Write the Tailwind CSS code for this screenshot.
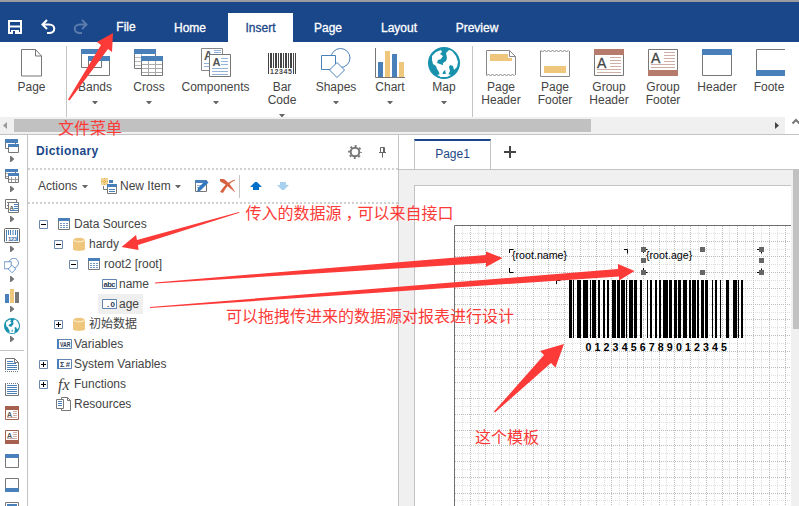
<!DOCTYPE html>
<html lang="zh">
<head>
<meta charset="utf-8">
<title>Report Designer</title>
<script src="https://cdn.jsdelivr.net/npm/@tailwindcss/browser@4"></script>
</head>
<body class="w-[799px] h-[506px] overflow-hidden bg-white text-[12px] leading-[13px] text-[#444] font-['Liberation_Sans','Noto_Sans_CJK_SC',sans-serif]">

<svg width="0" height="0" class="absolute">
  <defs>
    <symbol id="caret" viewBox="0 0 6 4"><path d="M0 1h6L3.500 4h-1z" fill="#666"/></symbol>
    <symbol id="right" viewBox="0 0 4 6"><path d="M0 0h1l3 2.500v1L1 6H0z" fill="#777"/></symbol>
    <symbol id="minus" viewBox="0 0 9 9"><path d="M.5.5h8v8h-8z" fill="#fff" stroke="#6c88a8"/><path d="M2 4.500h5" stroke="#000"/></symbol>
    <symbol id="plus" viewBox="0 0 9 9"><path d="M.5.5h8v8h-8z" fill="#fff" stroke="#6c88a8"/><path d="M2 4.500h5M4.500 2v5" stroke="#000"/></symbol>
    <symbol id="table" viewBox="0 0 12 12"><path d="M.5 1v10.500h11V1" fill="#fff" stroke="#777"/><path d="M0 0h12v3H0z" fill="#4a80ba"/><path d="M2 5.500h8M2 7.500h8M2 9.500h8" stroke="#6f9acb" stroke-dasharray="2 1"/></symbol>
    <symbol id="db" viewBox="0 0 12 14"><path d="M0 3v9c0 2.500 12 2.500 12 0V3z" fill="#efc77c"/><ellipse cx="6" cy="2.600" rx="5.700" ry="2.200" fill="#efc77c" stroke="#fff" stroke-width=".7"/></symbol>
    <symbol id="globe" viewBox="0 0 32 32"><circle cx="16" cy="16" r="16" fill="#1891ad"/><path d="M4 9L8 5l5-2 1 2-2 2 3 2-2 3-3 1-1 3 3 1 5 2 1 3-3 3-1 4-2 1-1-5-2-3-1-3-3-2-1-4zM18 6l3-3 3 1 4 5 2 6-1 5-3 3-1-4-3-1-1 2 1 4-2 4-2 0-1-6-2-2 0-4 3-2 1-3zM9 28l4-1 7 0 3 1-4 2-6 0z" fill="#fff"/></symbol>
    <symbol id="shapes" viewBox="0 0 30 30"><g fill="#fff" stroke="#4a80ba"><circle cx="19.500" cy="10" r="9.500"/><path d="M.5 7.500h14v14H.5z"/><path d="M16 14.500l7.500 7.500-7.500 7.500L8.500 22z"/></g></symbol>
  </defs>
</svg>

<header class="h-[42px] border-t-2 border-[#999b9e] bg-[#1a4789] flex text-white">
  <div class="w-[89px] shrink-0 flex">
    <svg width="89" height="40" fill="none">
      <path d="M9 19h12v12H9z" stroke="#fff" stroke-width="2"/><path d="M9 24.500h12" stroke="#fff" stroke-width="2"/><path d="M11 28h8v4h-8z" fill="#fff"/><path d="M13 29h2v3h-2z" fill="#1a4789"/>
      <path d="M47 18l-4.500 4.500L47 27M43 22.500h6c7 0 7 8.500 0 8.500h-2" stroke="#fff" stroke-width="2.100"/>
      <path d="M82 18l4.500 4.500L82 27M86 22.500h-6c-7 0-7 8.500 0 8.500h2" stroke="#5b7bad" stroke-width="2"/>
    </svg>
  </div>
  <nav class="flex pt-[11px] h-[40px] [&>div]:text-center [&>div]:leading-[30px] [&>div]:[-webkit-text-stroke:0.3px]">
    <div class="w-[74px] -mt-px">File</div>
    <div class="w-[54px]">Home</div>
    <div class="w-[65px] ml-[11px] bg-white text-[#1a4789]">Insert</div>
    <div class="w-[70px]">Page</div>
    <div class="w-[72px]">Layout</div>
    <div class="w-[84px]">Preview</div>
  </nav>
</header>

<section class="h-[93px] border-b border-[#c3c3c3]">
  <div class="h-[75px] w-[785px] overflow-hidden flex text-center pt-[4px] [&>div]:shrink-0 [&>div]:flex [&>div]:flex-col [&>div]:items-center [&>div>svg:first-child]:mb-[1px] [&>div>svg:first-child]:shrink-0 [&>div>svg:first-child]:h-[34px]">
    <div class="w-[63px]"><svg width="22" height="34" viewBox="0 0 22 34"><path d="M.5 3.500h14l6 6.500v20H.5zM14.500 3.500V10h6" fill="#fff" stroke="#777"/></svg>Page</div>
    <div class="w-[5px]"><i class="w-px h-[72px] bg-[#c6c6c6] ml-[2px]"></i></div>
    <div class="w-[54px]"><svg width="29" height="34"><path d="M.5 4v17.500h20V4M7.500 11v18.500h21V11" fill="#fff" stroke="#777"/><path d="M0 3h21v5H0z" fill="#4a80ba"/><path d="M7 10h22v5H7z" fill="#4a80ba"/></svg>Bands<svg width="6" height="4" class="mt-[6px]"><use href="#caret"/></svg></div>
    <div class="w-[54px]"><svg width="30" height="34"><path d="M.5 4v18.500h21V4" fill="#fff" stroke="#777"/><path d="M1 11.500h20M1 15.500h20M1 19.500h20M7.500 8v14" stroke="#bbb"/><path d="M0 3h22v5H0z" fill="#4a80ba"/><path d="M7.500 11v18.500h21V11" fill="#fff" stroke="#777"/><path d="M8 18.500h20M8 22.500h20M8 26.500h20M14.500 15v14M21.500 15v14" stroke="#aaa"/><path d="M7 10h22v5H7z" fill="#4a80ba"/></svg>Cross<svg width="6" height="4" class="mt-[6px]"><use href="#caret"/></svg></div>
    <div class="w-[79px]"><svg width="30" height="34" class="ml-[1px]"><path d="M.5 2.500h21v22H.5z" fill="#fff" stroke="#888"/><text x="3" y="14" font-size="12" font-weight="bold" fill="#555">A</text><path d="M13 4.500h7M13 6.500h7M3 17.500h7M3 20.500h7" stroke="#94b3d8"/><path d="M8.500 8.500h21v22h-21z" fill="#fff" stroke="#777"/><text x="11.500" y="20" font-size="11" font-weight="bold" fill="#555">A</text><path d="M20 12.500h7M20 15.500h7M20 18.500h7M11 22.500h16M11 25.500h16M11 28.500h16" stroke="#94b3d8"/></svg>Components<svg width="6" height="4" class="mt-[6px]"><use href="#caret"/></svg></div>
    <div class="w-[54px]"><svg width="28" height="34" shape-rendering="crispEdges" fill="#444"><path d="M0 7h1v21H0zM2 7h2v15H2zM5 7h1v15H5zM7 7h2v15H7zM10 7h1v15h-1zM12 7h2v15h-2zM15 7h1v15h-1zM17 7h2v15h-2zM20 7h1v15h-1zM22 7h2v15h-2zM25 7h1v21h-1zM27 7h1v21h-1z"/><text x="2" y="28" font-size="7" font-weight="bold" textLength="22">12345</text></svg>Bar<br>Code<svg width="6" height="4" class="mt-[6px]"><use href="#caret"/></svg></div>
    <div class="w-[54px]"><svg width="30" height="34" viewBox="0 0 30 34"><use href="#shapes" y="2" width="30" height="30"/></svg>Shapes<svg width="6" height="4" class="mt-[6px]"><use href="#caret"/></svg></div>
    <div class="w-[54px]"><svg width="30" height="34"><path d="M.5 2v29.500H30" fill="none" stroke="#777"/><path d="M3 16h5v15H3zM17 8h5v23h-5z" fill="#4a80ba"/><path d="M10 5h5v26h-5zM24 16h5v15h-5z" fill="#efc77c"/></svg>Chart<svg width="6" height="4" class="mt-[6px]"><use href="#caret"/></svg></div>
    <div class="w-[54px]"><svg width="32" height="34"><use href="#globe" y="1" width="32" height="32"/></svg>Map<svg width="6" height="4" class="mt-[6px]"><use href="#caret"/></svg></div>
    <div class="w-[3px]"><i class="w-px h-[72px] bg-[#c6c6c6]"></i></div>
    <div class="w-[54px]"><svg width="30" height="34"><path d="M.5 29V4.500h23l6 6V29M23.500 4.500v6h6" fill="none" stroke="#888"/><path d="M.5 30l2-2 2 2 2-2 2 2 2-2 2 2 2-2 2 2 2-2 2 2 2-2 2 2 2-2 2 2" fill="none" stroke="#888"/><path d="M4 8h18v4h4v3H4z" fill="#efc77c"/></svg>Page<br>Header</div>
    <div class="w-[54px]"><svg width="30" height="34"><path d="M.5 5v25.500h29V5" fill="none" stroke="#888"/><path d="M.5 4l2 2 2-2 2 2 2-2 2 2 2-2 2 2 2-2 2 2 2-2 2 2 2-2 2 2 2-2" fill="none" stroke="#888"/><path d="M4 20h22v7H4z" fill="#efc77c"/></svg>Page<br>Footer</div>
    <div class="w-[54px]"><svg width="30" height="34"><path d="M.5 3.500h29v26H.5z" fill="#fff" stroke="#777"/><path d="M0 3h30v6H0z" fill="#b57b6d"/><text x="3" y="22" font-size="14" fill="#444" stroke="#444" stroke-width=".3">A</text><path d="M16 11.500h11M16 14.500h11M16 17.500h11M16 20.500h11M3 23.500h24M3 26.500h24" stroke="#d0ada5"/></svg>Group<br>Header</div>
    <div class="w-[54px]"><svg width="30" height="34"><path d="M.5 3.500h29v26H.5z" fill="#fff" stroke="#777"/><path d="M0 24h30v6H0z" fill="#b57b6d"/><text x="3" y="17" font-size="14" fill="#444" stroke="#444" stroke-width=".3">A</text><path d="M16 6.500h11M16 9.500h11M16 12.500h11M16 15.500h11M3 18.500h24M3 21.500h24" stroke="#d0ada5"/></svg>Group<br>Footer</div>
    <div class="w-[54px]"><svg width="30" height="34"><path d="M.5 3.500h29v26H.5z" fill="#fff" stroke="#777"/><path d="M0 3h30v6H0z" fill="#4a80ba"/></svg>Header</div>
    <div class="w-[54px]"><svg width="30" height="34"><path d="M.5 3.500h29v26H.5z" fill="#fff" stroke="#777"/><path d="M0 24h30v6H0z" fill="#4a80ba"/></svg><span class="mr-[4px]">Foote</span></div>
  </div>
  <div class="h-[17px] flex items-center">
    <div class="w-[785px] h-[17px] bg-[#f0f0f0] flex items-center">
      <svg width="14" height="9"><path d="M7 1v7L3 4.500z" fill="#999"/></svg>
      <i class="w-[577px] h-[13px] bg-[#c1c1c1]"></i>
      <svg width="8" height="9" class="ml-[182px]"><path d="M2 1v7l4-3.500z" fill="#444"/></svg>
    </div>
    <svg width="14" height="17"><path d="M7.500 6.500L11 3l3.500 3.500" fill="none" stroke="#777" stroke-width="2"/></svg>
  </div>
</section>

<main class="flex h-[371px]">
  <aside class="w-[28px] border-r border-[#c3c3c3] shrink-0">
    <svg width="27" height="371" fill="none">
      <path d="M5.500 4v9.500h10V4" fill="#fff" stroke="#777"/><path d="M5 4h13v4H5z" fill="#4a80ba"/><path d="M8.500 9v8.500h10V9" fill="#fff" stroke="#777"/><path d="M8 9h11v3H8z" fill="#4a80ba"/>
      <path d="M5.500 35v8.500h10V35" fill="#fff" stroke="#777"/><path d="M6 38.500h5M6 41.500h5" stroke="#aaa"/><path d="M5 34h13v3H5z" fill="#4a80ba"/><path d="M8.500 39v8.500h10V39" fill="#fff" stroke="#777"/><path d="M9 44.500h9M11.500 42v5M15.500 42v5" stroke="#999"/><path d="M8 38h11v3H8z" fill="#4a80ba"/>
      <path d="M5.500 64.500h11v9h-11z" fill="#fff" stroke="#777"/><path d="M7 67.500h2M7 70.500h2" stroke="#777"/><path d="M8.500 67.500h10v10h-10z" fill="#fff" stroke="#777"/><text x="9.500" y="75" font-size="6" font-weight="bold" fill="#444">A</text><path d="M14 69.500h4M14 71.500h4M14 73.500h4M10 75.500h8" stroke="#4a80ba"/>
      <rect x="4.500" y="93.500" width="15" height="14" rx="1" stroke="#666"/><path d="M6.500 95v11M8.500 95v5M10.500 95v5M13 95v5M15.500 95v5M17.500 95v11" stroke="#4a80ba"/><text x="8" y="106" font-size="6" font-weight="bold" fill="#3a70aa" textLength="9">123</text>
      <use href="#shapes" x="4" y="123" width="15" height="15" stroke-width="1.600"/>
      <path d="M5 159h4v9H5z" fill="#4a80ba"/><path d="M10 154h4v14h-4z" fill="#efc77c"/><path d="M15 157h4v11h-4z" fill="#777"/>
      <use href="#globe" x="4" y="183" width="16" height="16"/>
      <g><use href="#right" x="10" y="21" width="4" height="6"/><use href="#right" x="10" y="51" width="4" height="6"/><use href="#right" x="10" y="81" width="4" height="6"/><use href="#right" x="10" y="111" width="4" height="6"/><use href="#right" x="10" y="141" width="4" height="6"/><use href="#right" x="10" y="171" width="4" height="6"/><use href="#right" x="10" y="201" width="4" height="6"/></g>
      <path d="M0 215.500h24" stroke="#c3c3c3"/>
      <path d="M5.500 235v-11.500h9l4 4V235M14.500 223.500v4h4" stroke="#777"/><path d="M5 236.500h14" stroke="#777" stroke-dasharray="1 1"/><path d="M7 226.500h6M7 228.500h9M7 230.500h10M7 232.500h10M7 234.500h10" stroke="#4a80ba"/>
      <path d="M5.500 249v11.500h13V249" stroke="#777"/><path d="M5 248.500h14" stroke="#777" stroke-dasharray="1 1"/><path d="M7 250.500h10M7 252.500h10M7 254.500h10M7 256.500h10M7 258.500h10" stroke="#4a80ba"/>
      <path d="M5.500 271.500h13v13h-13z" stroke="#a5604f"/><path d="M5 271h14v4H5z" fill="#a5604f"/><text x="7" y="282" font-size="7" font-weight="bold" fill="#555">A</text><path d="M13 276.500h4M13 278.500h4M13 280.500h4M7 282.500h10" stroke="#d0ada5"/>
      <path d="M5.500 295.500h13v13h-13z" stroke="#a5604f"/><path d="M5 305h14v4H5z" fill="#a5604f"/><text x="7" y="303" font-size="7" font-weight="bold" fill="#555">A</text><path d="M13 297.500h4M13 299.500h4M13 301.500h4M7 303.500h10" stroke="#d0ada5"/>
      <path d="M5.500 319.500h13v13h-13z" stroke="#777"/><path d="M5 319h14v4H5z" fill="#4a80ba"/>
      <path d="M5.500 343.500h13v13h-13z" stroke="#777"/><path d="M5 353h14v4H5z" fill="#4a80ba"/>
      <path d="M5.500 367.500h13v13h-13z" stroke="#777"/><path d="M7 369h10v3H7z" fill="#4a80ba"/>
    </svg>
  </aside>

  <section class="w-[371px] shrink-0 border-r border-[#c3c3c3]">
    <div class="h-[35px] border-b-2 border-dotted border-[#d0d0d0] flex items-center px-[8px]">
      <h2 class="font-bold text-[12px] tracking-[0.4px] text-[#1a4789] w-[312px]">Dictionary</h2>
      <svg width="14" height="14" fill="none"><circle cx="7" cy="7" r="4.300" stroke="#777" stroke-width="2"/><circle cx="7" cy="7" r="6" stroke="#777" stroke-width="1.800" stroke-dasharray="2 2.710" stroke-dashoffset="1"/></svg>
      <svg width="7" height="12" class="ml-[17px]" fill="none" stroke="#666"><path d="M1.500 6V1.500h4V6M4.500 1v5M0 6.500h7M3.500 7v4.500"/></svg>
    </div>
    <div class="h-[34px] border-b-2 border-dotted border-[#d0d0d0] flex items-center pl-[10px]">
      <span class="w-[44px]">Actions</span><svg width="6" height="4"><use href="#caret"/></svg>
      <svg width="16" height="16" class="ml-[13px]"><path d="M0 0h7v7H0z" fill="#f2d391"/><path d="M3.500 0v7M0 3.500h7" stroke="#e3ad45" stroke-dasharray="1 1"/><path d="M2.500 8v3.500H6" fill="none" stroke="#777"/><path d="M8 2h4v3H8z" fill="#4a80ba"/><path d="M6.500 7v8.500h9V7" fill="#fff" stroke="#777"/><path d="M6 6h10v3H6z" fill="#4a80ba"/><path d="M8 11.500h6M8 13.500h6" stroke="#4a80ba"/></svg>
      <span class="w-[55px] ml-[3px] whitespace-nowrap">New Item</span><svg width="6" height="4"><use href="#caret"/></svg>
      <svg width="15" height="14" class="ml-[13px]"><path d="M1.500 1.500h11v11h-11z" fill="#fff" stroke="#777"/><path d="M1 1h10v3H1z" fill="#4a80ba"/><path d="M3 6.500h5M3 8.500h3" stroke="#94b3d8"/><path d="M3 13l1-4 8-8 2.500 2.500-8 8z" fill="#3479c0"/></svg>
      <svg width="15" height="14" class="ml-[11px]"><path d="M0 0h3.500C8 3 11 7 14.500 12.500 10 9 6 5 0 2zM15 1C10 3 6 8 3 13.500L.5 13C4 7 8 3 15 1z" fill="#d7603f" stroke="#d7603f" stroke-width=".6"/></svg>
      <i class="w-px h-[23px] bg-[#c6c6c6] ml-[4px]"></i>
      <svg width="12" height="8" class="ml-[10px]"><path d="M5 0h2l5 5H9v3H3V5H0z" fill="#0070c8"/></svg>
      <svg width="12" height="8" class="ml-[15px]"><path d="M3 0h6v3h3L7 8H5L0 3h3z" fill="#a8d0ef"/></svg>
    </div>
    <ul class="pt-[10px] [&>li]:h-[20px] [&>li]:flex [&>li]:items-center [&_svg]:shrink-0">
      <li class="pl-[11px]"><svg width="9" height="9"><use href="#minus"/></svg><svg width="12" height="12" class="ml-[10px] mr-[4px]"><use href="#table"/></svg>Data Sources</li>
      <li class="pl-[26px]"><svg width="9" height="9"><use href="#minus"/></svg><svg width="12" height="14" class="ml-[10px] mr-[4px]"><use href="#db"/></svg>hardy</li>
      <li class="pl-[41px]"><svg width="9" height="9"><use href="#minus"/></svg><svg width="12" height="12" class="ml-[10px] mr-[4px]"><use href="#table"/></svg>root2 [root]</li>
      <li class="pl-[74px]"><svg width="15" height="10" class="mr-[2px]"><path d="M.5.5h14v9H.5z" fill="#fff" stroke="#6384b0"/><text x="1.500" y="8" font-size="7.500" font-weight="bold" fill="#2a3a55" textLength="12">abc</text></svg>name</li>
      <li class="pl-[70px]"><span class="flex items-center h-[20px] w-[45px] bg-[#efefef] pl-[4px]"><svg width="15" height="10" class="mr-[2px]"><path d="M.5.5h14v9H.5z" fill="#fff" stroke="#6384b0"/><text x="5" y="8" font-size="8" font-weight="bold" fill="#2a3a55" textLength="8">.0</text></svg>age</span></li>
      <li class="pl-[26px]"><svg width="9" height="9"><use href="#plus"/></svg><svg width="12" height="14" class="ml-[10px] mr-[4px]"><use href="#db"/></svg>初始数据</li>
      <li class="pl-[29px]"><svg width="15" height="10" class="mr-[2px]"><path d="M.5.5h14v9H.5z" fill="#fff" stroke="#6384b0"/><path d="M0 0h2v10H0z" fill="#4a80ba"/><text x="3" y="7.500" font-size="6.500" font-weight="bold" fill="#2a3a55" textLength="10.500" lengthAdjust="spacingAndGlyphs">VAR</text></svg>Variables</li>
      <li class="pl-[11px]"><svg width="9" height="9"><use href="#plus"/></svg><svg width="15" height="10" class="ml-[9px] mr-[2px]"><path d="M.5.5h14v9H.5z" fill="#fff" stroke="#6384b0"/><path d="M0 0h2v10H0z" fill="#4a80ba"/><text x="3" y="8" font-size="7.500" font-weight="bold" fill="#2a3a55" textLength="10">Σ#</text></svg>System Variables</li>
      <li class="pl-[11px]"><svg width="9" height="9"><use href="#plus"/></svg><span class="w-[16px] ml-[10px] font-['Liberation_Serif',serif] italic text-[16px]">fx</span>Functions</li>
      <li class="pl-[28px]"><svg width="16" height="15" class="mr-[2px]" fill="#fff" stroke="#777"><path d="M5.500.5h6l3 3v10h-9z"/><path d="M11.500.5v3h3" fill="none"/><path d="M.5 2.500h7v9h-7z"/><path d="M2 4.500h4M2 6.500h4M2 8.500h4" stroke="#4a80ba"/></svg>Resources</li>
    </ul>
  </section>

  <section class="flex-1 flex flex-col min-w-0">
    <div class="h-[35px] border-b border-[#c3c3c3] flex pl-[15px] shrink-0">
      <div class="w-[77px] h-[30px] mt-[4px] border-x border-t-2 border-x-[#c3c3c3] border-t-[#1a4789] text-center text-[#1a4789] leading-[27px]">Page1</div>
      <svg width="12" height="12" class="ml-[13px] mt-[11px]"><path d="M0 6h12M6 0v12" stroke="#444" stroke-width="2"/></svg>
    </div>
    <div class="flex-1 bg-[#f0f0f0] flex">
      <div class="mt-[15px] ml-[15px] w-[377px] bg-white border-t border-l border-[#c3c3c3]">
        <svg width="376" height="320" viewBox="415 186 376 320" class="block">
          <g id="grid" shape-rendering="crispEdges"></g>
          <path d="M454.500 506V225.500H791" fill="none" stroke="#6e6e6e"/>
          <path fill="none" stroke="#000" d="M509.500 253v-3.500h4M624 249.500h3.500v4M509.500 268v4.500h4M556.500 284v-3.500h4M643.500 253v-3.500h4M643.500 268v4.500h4M757 249.500h4.500v4M757 272.500h4.500v-4"/>
          <g id="bars" shape-rendering="crispEdges"></g>
          <path fill="#666" d="M641 247h5v5h-5zM641 258h5v5h-5zM641 270h5v5h-5zM700 247h5v5h-5zM700 270h5v5h-5zM759 247h5v5h-5zM759 258h5v5h-5zM759 270h5v5h-5z"/>
          <g fill="#000" font-size="10.670"><text x="512" y="259">{root.name}</text><text x="646" y="259">{root.age}</text><text x="585.500" y="351" font-weight="bold" textLength="141.500">0123456789012345</text></g>
        </svg>
      </div>
      <div class="w-[8px] bg-[#f0f0f0]"><i class="block w-[6px] ml-[2px] h-[159px] bg-[#c1c1c1]"></i></div>
    </div>
  </section>
</main>

<svg class="absolute left-0 top-0 pointer-events-none" width="799" height="506" fill="#fc3a38">
  <path d="M113 33L97 42l4 3L68 99.500l1.500 1L108 49l4 3z"/>
  <path d="M121.500 247L136 235l1 5L239 212l.5.700L138 245l.5 5z"/>
  <path d="M155 282.500L486 255v-3.500l16.500 6.500L486 267v-4L155 283.500z"/>
  <path d="M150 307L618 269v-5l16.500 7L619 280.500v-4L150 308z"/>
  <path d="M564 344l-24 7 4 4-50 56.500 1 1L551 363l4.500 4.500z"/>
  <g font-size="16" font-family="'Noto Sans CJK SC',sans-serif">
    <text x="58" y="134">文件菜单</text>
    <text x="245.500" y="219">传入的数据源<tspan dx="4">，</tspan><tspan dx="-4">可以来自接口</tspan></text>
    <text x="226" y="322">可以拖拽传进来的数据源对报表进行设计</text>
    <text x="475" y="443">这个模板</text>
  </g>
</svg>

<script>
  const NS = 'http://www.w3.org/2000/svg';
  const add = (parent, tag, attrs) => {
    const el = document.createElementNS(NS, tag);
    for (const k in attrs) el.setAttribute(k, attrs[k]);
    parent.appendChild(el);
  };
  // Dotted grid: every second line is darker.
  const grid = document.getElementById('grid');
  const step = 7.87;
  for (const major of [false, true]) {
    for (let i = major ? 2 : 1; i < 44; i += 2) {
      const x = Math.floor(454.5 + i * step) + .5, y = Math.floor(225.5 + i * step) + .5;
      const stroke = major ? '#bdbdbd' : '#dedede';
      if (x < 791) add(grid, 'path', { d: `M${x} 226V506`, stroke, 'stroke-dasharray': '1 1' });
      if (y < 506) add(grid, 'path', { d: `M455 ${y}H791`, stroke, 'stroke-dasharray': '1 1' });
    }
  }
  // Barcode: pairs of [start, end) columns.
  const bars = [[569,572],[573,574],[577,581],[583,588],[590,591],[592,596],[598,600],[603,605],[607,609],[612,616],[617,620],[621,625],[626,627],[629,633],[634,637],[640,642],[647,648],[650,652],[655,657],[659,661],[663,668],[669,672],[674,677],[678,681],[683,687],[689,691],[692,696],[697,699],[701,704],[705,708],[712,713],[715,717],[720,721],[726,729],[733,737],[738,739],[741,743]];
  for (const [a, b] of bars) add(document.getElementById('bars'), 'rect', { x: a, y: 280, width: b - a, height: 58 });
</script>
</body>
</html>
